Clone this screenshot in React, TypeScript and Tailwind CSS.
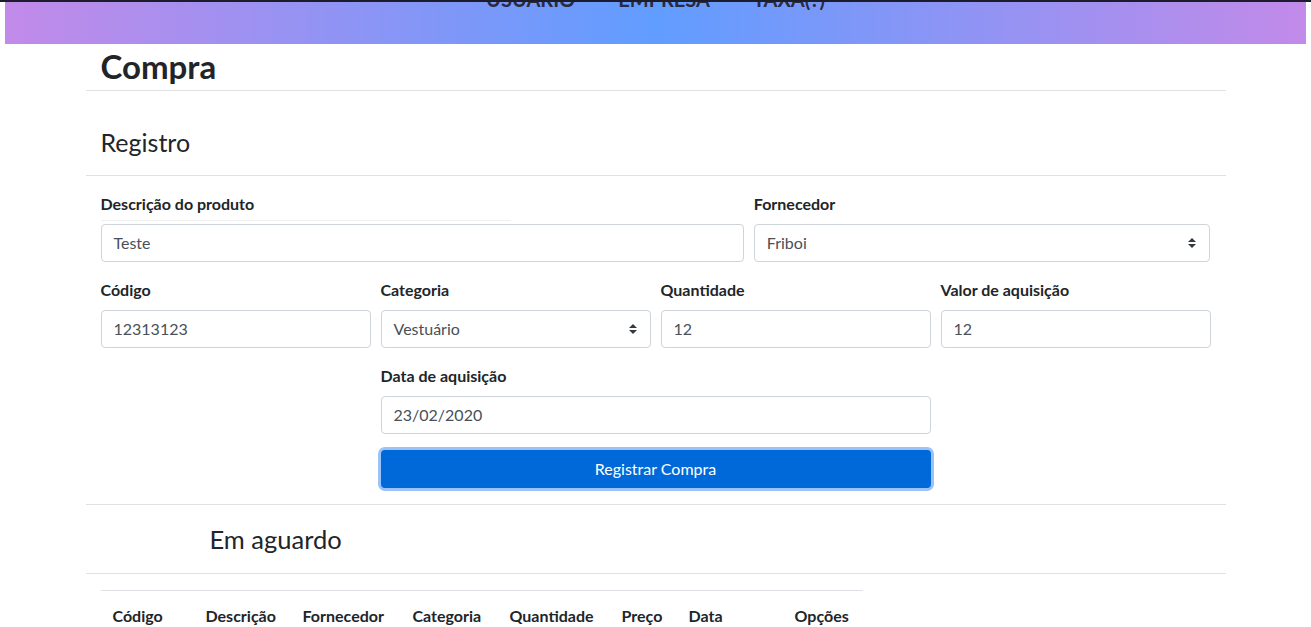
const font = { fontFamily: 'Lato, "Liberation Sans", sans-serif' };

const Field = ({ label, value, select, className = '' }: { label: string; value: string; select?: boolean; className?: string }) => (
  <div className={'px-[5px] ' + className}>
    <div className="h-[24px] text-[16px] font-bold text-[#212529] leading-[24px]">{label}</div>
    <div className="mt-[8px] h-[38px] rounded-[4px] border border-[#ced4da] bg-white px-[12px] flex items-center justify-between text-[16px] text-[#495057]">
      <span>{value}</span>
      {select && (
        <svg width="8" height="10" viewBox="0 0 8 10" className="mr-[1px]">
          <path d="M4 0 L8 4 H0 Z M4 10 L0 6 H8 Z" fill="#343a40" />
        </svg>
      )}
    </div>
  </div>
);

const cols: [string, string][] = [
  ['Código', 'w-[93px]'],
  ['Descrição', 'w-[97px]'],
  ['Fornecedor', 'w-[110px]'],
  ['Categoria', 'w-[97px]'],
  ['Quantidade', 'w-[112px]'],
  ['Preço', 'w-[67px]'],
  ['Data', 'w-[106px]'],
  ['Opções', 'flex-1'],
];

export default function App() {
  return (
    <div className="min-h-[627px] bg-white text-[#212529]" style={font}>
      {/* top nav, scrolled partially out of view */}
      <div className="border-t-2 border-[#1c1c2c]">
        <div className="mx-[5px] h-[42px] bg-[linear-gradient(90deg,#c28ae9_0%,#609dff_50%,#c28ae9_100%)] flex justify-center gap-[43px] overflow-hidden">
          <span className="-mt-[13px] text-[20px] font-bold leading-[20px] text-[#2a2a40]">USUÁRIO</span>
          <span className="-mt-[13px] text-[20px] font-bold leading-[20px] text-[#2a2a40]">EMPRESA</span>
          <span className="-mt-[13px] text-[20px] font-bold leading-[20px] text-[#2a2a40]">TAXA(?)</span>
        </div>
      </div>

      <div className="mx-auto w-[1140px]">
        <div className="h-[47px] border-b border-[#e1e1e1] px-[15px] flex items-center">
          <h1 className="text-[33px] font-bold leading-[38px] -mt-[2px]">Compra</h1>
        </div>

        <div className="h-[85px] border-b border-[#e1e1e1] px-[15px] flex items-end pb-[18px]">
          <h3 className="text-[25px] leading-[29px]">Registro</h3>
        </div>

        <div className="px-[10px] pt-[16px] pb-[16px] border-b border-[#e1e1e1]">
          <div className="flex">
            <div className="w-7/12 relative">
              <Field label="Descrição do produto" value="Teste" />
              <div className="absolute left-[5px] top-[28px] w-[410px] h-px bg-[#f0f0f0]" />
            </div>
            <Field label="Fornecedor" value="Friboi" select className="w-5/12" />
          </div>
          <div className="flex mt-[16px]">
            <Field label="Código" value="12313123" className="w-1/4" />
            <Field label="Categoria" value="Vestuário" select className="w-1/4" />
            <Field label="Quantidade" value="12" className="w-1/4" />
            <Field label="Valor de aquisição" value="12" className="w-1/4" />
          </div>
          <div className="flex mt-[16px]">
            <div className="w-1/4" />
            <div className="w-1/2">
              <Field label="Data de aquisição" value="23/02/2020" />
              <div className="px-[5px] mt-[16px]">
                <button className="w-full h-[38px] rounded-[4px] bg-[#0069d9] text-white text-[16px] shadow-[0_0_0_3px_rgba(130,180,245,0.8)]">
                  Registrar Compra
                </button>
              </div>
            </div>
          </div>
        </div>

        <div className="h-[69px] border-b border-[#e1e1e1] pl-[124px] flex items-center">
          <h3 className="text-[25.5px] leading-[29px]">Em aguardo</h3>
        </div>

        <div className="px-[15px] pt-[16px]">
          <div className="w-[762px] border-t border-[#dee2e6] flex pt-[13px] text-[16px] font-bold leading-[24px]">
            {cols.map(([name, w]) => (
              <div key={name} className={'pl-[12px] ' + w}>{name}</div>
            ))}
          </div>
        </div>
      </div>
    </div>
  );
}
